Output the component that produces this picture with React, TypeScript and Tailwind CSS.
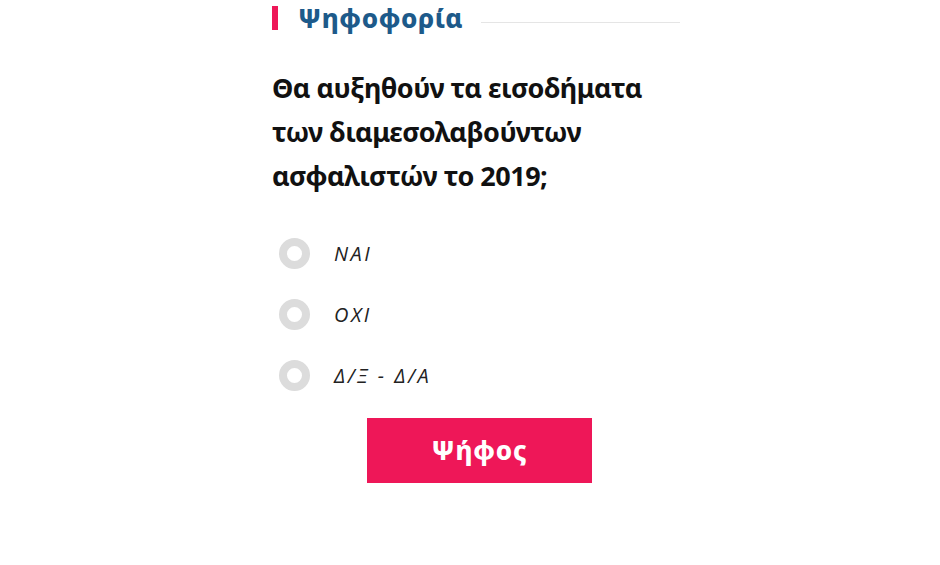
import { useState } from 'react';

const options = ['ΝΑΙ', 'ΟΧΙ', 'Δ/Ξ - Δ/Α'];

export default function App() {
  const [choice, setChoice] = useState<number | null>(null);

  return (
    <div className="w-[940px] h-[565px] bg-white pl-[272px]">
      <div className="w-[408px] pt-[5px]">
        {/* header */}
        <div className="flex items-center h-[25px]">
          <div className="w-[6px] h-[24px] bg-[#ee1758]" />
          <h2 className="ml-[20px] text-[26px] leading-none font-extrabold text-[#1d5a8a] tracking-[0.6px] font-['Noto_Sans',sans-serif]">
            Ψηφοφορία
          </h2>
          <div className="flex-1 ml-[18px] mt-[10px] h-px bg-[#e5e5e5]" />
        </div>

        {/* question */}
        <p className="mt-[36px] text-[27px] leading-[44px] font-bold text-[#111] font-['Noto_Sans',sans-serif] tracking-[-0.5px]">
          Θα αυξηθούν τα εισοδήματα των διαμεσολαβούντων ασφαλιστών το 2019;
        </p>

        {/* options */}
        <div className="mt-[40px] flex flex-col gap-[30px]">
          {options.map((o, i) => (
            <label key={o} className="flex items-center h-[31px] cursor-pointer" onClick={() => setChoice(i)}>
              <span className="ml-[7px] w-[31px] h-[31px] rounded-full border-[8px] border-[#dcdcdc] bg-white flex items-center justify-center">
                {choice === i && <span className="w-[9px] h-[9px] rounded-full bg-[#ee1758]" />}
              </span>
              <span className="ml-[24px] text-[20px] italic text-[#222] tracking-[2.5px] font-['Open_Sans',sans-serif]">
                {o}
              </span>
            </label>
          ))}
        </div>

        {/* submit */}
        <div className="flex justify-center mt-[27px] pl-[7px]">
          <button className="w-[225px] h-[65px] bg-[#ee1758] text-white text-[26px] font-extrabold tracking-[0.8px] font-['Noto_Sans',sans-serif]">
            Ψήφος
          </button>
        </div>
      </div>
    </div>
  );
}
